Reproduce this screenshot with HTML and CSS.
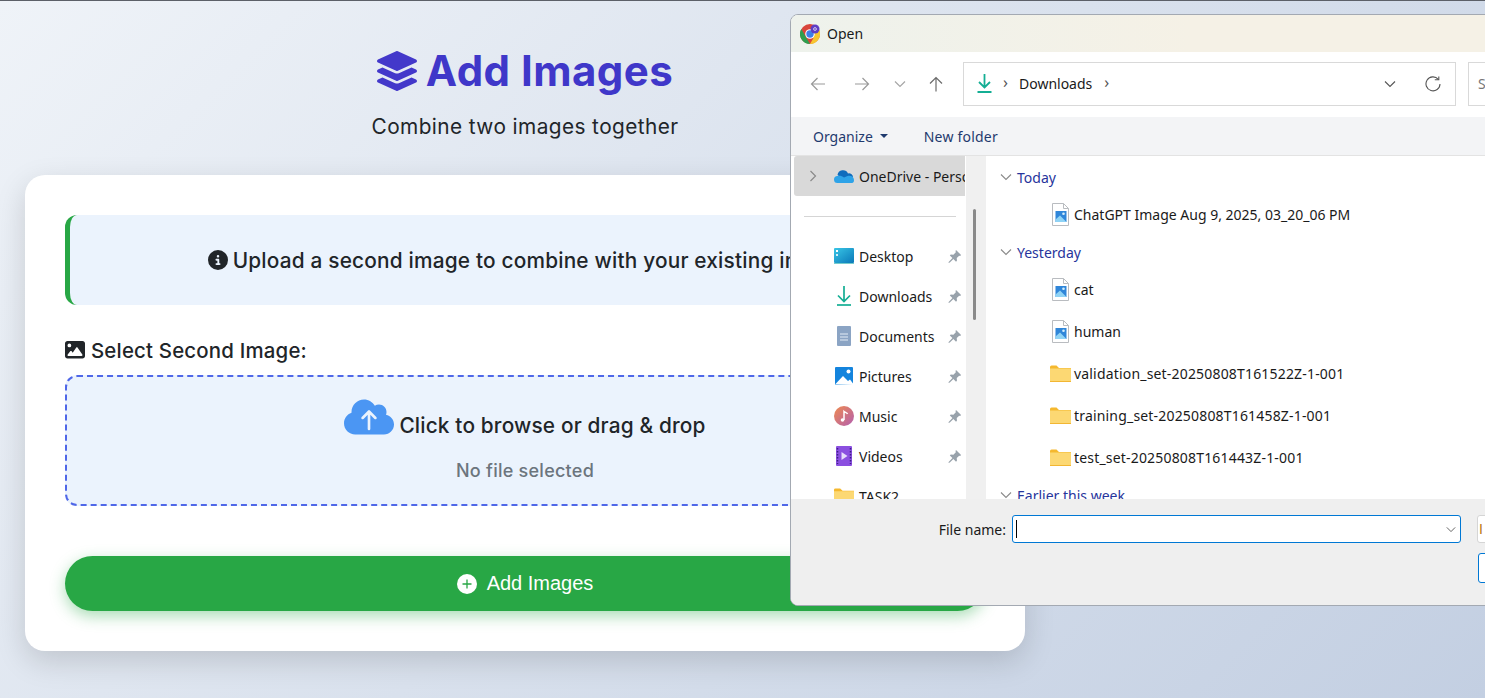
FILE: index.html
```html
<!DOCTYPE html>
<html lang="en">
<head>
<meta charset="utf-8">
<title>Add Images</title>
<link rel="stylesheet" href="styles.css">
</head>
<body>
<svg class="defs" width="0" height="0" aria-hidden="true">
  <symbol id="pin" viewBox="0 0 16 16"><path d="M9.600 1 15 6.400l-1 1-1-.3-2.600 2.600.2 2.800-1 1-2.800-2.800L3 14.500l-1.500.5.5-1.500 3.800-3.800L3 6.900l1-1 2.800.2 2.600-2.600-.3-1.500z"/></symbol>
  <symbol id="folder" viewBox="0 0 21 17"><path fill="#f5b82e" d="M0 2a1.500 1.500 0 0 1 1.500-1.500h5L9 3h12v14H0z"/><path fill="#fcd873" d="M0 3.500h21V16a1 1 0 0 1-1 1H1a1 1 0 0 1-1-1z"/><path fill="#f2b632" d="M0 16h21v1H0z"/></symbol>
  <symbol id="imgfile" viewBox="0 0 17 23"><path fill="#fff" stroke="#b9bcc0" d="M.5.500h11l5 5v17H.5z"/><path fill="none" stroke="#b9bcc0" d="M11.500.500v5h5"/><rect x="3.500" y="8" width="11" height="11" fill="#2f86d9"/><path fill="#8fd3f5" d="M3.500 19v-2.500L8 12.500l6.500 6.500z"/><circle cx="11.500" cy="10.800" r="1.300" fill="#d4effc"/></symbol>
  <symbol id="chev" viewBox="0 0 12 8"><path fill="none" stroke="currentColor" stroke-width="1.100" d="M1 1.500 6 6.500l5-5"/></symbol>
</svg>

<main class="page">
  <header class="head">
    <h1 class="title">
      <svg class="title-icon" viewBox="0 0 512 512"><path d="M12.410 148.020l232.940 105.670c6.800 3.090 14.490 3.090 21.290 0l232.940-105.670c16.550-7.510 16.550-32.520 0-40.030L266.650 2.310a25.607 25.607 0 0 0-21.290 0L12.410 107.980c-16.550 7.510-16.550 32.530 0 40.040zm487.180 88.280l-58.090-26.330-161.640 73.270c-7.560 3.430-15.590 5.170-23.860 5.170s-16.290-1.740-23.860-5.170L70.510 209.970l-58.100 26.330c-16.550 7.500-16.550 32.500 0 40l232.940 105.590c6.800 3.080 14.490 3.080 21.290 0L499.590 276.300c16.550-7.500 16.550-32.500 0-40zm0 127.800l-57.870-26.230-161.860 73.370c-7.560 3.430-15.590 5.170-23.860 5.170s-16.290-1.740-23.860-5.170L70.290 337.870 12.410 364.100c-16.550 7.500-16.550 32.500 0 40l232.940 105.590c6.800 3.080 14.490 3.080 21.290 0L499.590 404.100c16.550-7.500 16.550-32.500 0-40z"/></svg>
      Add Images
    </h1>
    <p class="subtitle">Combine two images together</p>
  </header>

  <section class="card">
    <div class="notice">
      <svg class="notice-icon" viewBox="0 0 512 512"><path d="M256 512A256 256 0 1 0 256 0a256 256 0 1 0 0 512zM216 336h24V272H216c-13.300 0-24-10.700-24-24s10.700-24 24-24h48c13.300 0 24 10.700 24 24v88h8c13.300 0 24 10.700 24 24s-10.700 24-24 24H216c-13.300 0-24-10.700-24-24s10.700-24 24-24zm40-208a32 32 0 1 1 0 64 32 32 0 1 1 0-64z"/></svg>
      <span>Upload a second image to combine with your existing image.</span>
    </div>

    <div class="field-label">
      <svg class="label-icon" viewBox="0 0 512 448"><path d="M0 64C0 28.700 28.700 0 64 0H448c35.300 0 64 28.700 64 64V384c0 35.300-28.700 64-64 64H64c-35.300 0-64-28.700-64-64V64zM323.800 170.500c-4.500-6.600-11.900-10.500-19.800-10.500s-15.400 3.900-19.800 10.500l-87 127.600L170.700 265c-4.600-5.700-11.500-9-18.700-9s-14.200 3.300-18.700 9l-64 80c-5.800 7.200-6.900 17.100-2.900 25.400s12.400 13.600 21.600 13.600h96 32H424c8.900 0 17.100-4.900 21.200-12.800s3.600-17.400-1.400-24.700l-120-176zM112 160a48 48 0 1 0 0-96 48 48 0 1 0 0 96z"/></svg>
      <span>Select Second Image:</span>
    </div>

    <div class="drop">
      <div class="drop-main">
        <svg class="cloud" viewBox="0 0 640 512"><path d="M144 480C64.500 480 0 415.500 0 336c0-62.800 40.200-116.200 96.200-135.900c-.1-2.700-.2-5.400-.2-8.100c0-88.400 71.600-160 160-160c59.300 0 111 32.200 138.700 80.200C409.900 102 428.300 96 448 96c53 0 96 43 96 96c0 12.200-2.300 23.800-6.400 34.600C596 238.400 640 290.100 640 352c0 70.700-57.300 128-128 128H144z"/><path class="cloud-arrow" d="M320 408V190M238 268l82-82 82 82"/></svg>
        <span>Click to browse or drag &amp; drop</span>
      </div>
      <div class="drop-status">No file selected</div>
    </div>

    <button class="submit" type="button">
      <svg class="plus" viewBox="0 0 20 20"><circle cx="10" cy="10" r="10" fill="#fff"/><path d="M10 5.500v9M5.500 10h9" stroke="#28a745" stroke-width="1.300"/></svg>
      <span>Add Images</span>
    </button>
  </section>
</main>

<div class="dialog">
  <div class="titlebar">
    <svg class="chrome" viewBox="0 0 20 20">
      <circle cx="10" cy="10" r="10" fill="#d9453a"/>
      <path fill="#2f9e4f" d="M10 20A10 10 0 0 1 1.300 5l5.200 9z"/>
      <path fill="#f7c62f" d="M10 20a10 10 0 0 0 8.700-15H10l3.500 9z"/>
      <circle cx="10" cy="10" r="4.800" fill="#fff"/>
      <circle cx="10" cy="10" r="3.700" fill="#3f7ee8"/>
      <circle cx="15" cy="5" r="4.500" fill="#5f3dc4"/>
      <circle cx="15" cy="5" r="1.400" fill="none" stroke="#fff" stroke-width=".7"/>
    </svg>
    <span>Open</span>
  </div>

  <div class="navbar">
    <svg class="nav-btn nav-back" viewBox="0 0 16 16"><path d="M15 8H1.500M7.500 2 1.500 8l6 6"/></svg>
    <svg class="nav-btn nav-fwd" viewBox="0 0 16 16"><path d="M1 8h13.500M8.500 2l6 6-6 6"/></svg>
    <svg class="nav-btn nav-down" viewBox="0 0 12 8"><path d="M1 1.500 6 6.500l5-5"/></svg>
    <svg class="nav-btn nav-up" viewBox="0 0 16 16"><path d="M8 15.500V1.500M2 7.500l6-6 6 6"/></svg>
    <div class="address">
      <svg class="dl-icon" viewBox="0 0 15 19"><path d="M7.500 0v13.500M2 8l5.500 5.500L13 8" fill="none" stroke="#14ae94" stroke-width="1.800"/><path d="M.5 18h14" stroke="#14ae94" stroke-width="1.800"/></svg>
      <span class="crumb-sep">›</span>
      <span class="crumb">Downloads</span>
      <span class="crumb-sep">›</span>
      <span class="grow"></span>
      <svg class="addr-chev" viewBox="0 0 12 8"><use href="#chev"/></svg>
      <svg class="refresh" viewBox="0 0 16 16"><path d="M13.300 3.300A7 7 0 1 0 15 8" fill="none" stroke="#555" stroke-width="1.100"/><path d="M9.800 3.700h4V.500" fill="none" stroke="#555" stroke-width="1.100"/></svg>
    </div>
    <div class="search">S</div>
  </div>

  <div class="toolbar">
    <span class="tool tool-org">Organize<i class="caret"></i></span>
    <span class="tool tool-new">New folder</span>
  </div>

  <div class="panes">
    <nav class="side">
      <div class="side-top">
        <svg class="side-chev" viewBox="0 0 8 12"><path d="M1.500 1l5 5-5 5" fill="none" stroke="#8a8a8a" stroke-width="1.200"/></svg>
        <svg class="onedrive" viewBox="0 0 20 14"><path fill="#0f6cbd" d="M3.500 6A5.500 5.500 0 0 1 14 4.500 4 4 0 0 1 19 8l-9 3z"/><path fill="#2ea3e8" d="M3.500 14A3.500 3.500 0 0 1 3.500 7C6 6.500 8 7 10 8.500l3.500-1.500c3-1 6.500.5 6.500 4s-2 3-3.500 3z"/></svg>
        <span class="side-clip">OneDrive - Personal</span>
      </div>
      <div class="side-rule"></div>
      <div class="side-item">
        <svg class="side-icon" viewBox="0 0 20 16"><defs><linearGradient id="gd" x1="0" y1="0" x2="1" y2="1"><stop offset="0" stop-color="#39c6e6"/><stop offset="1" stop-color="#0a78b8"/></linearGradient></defs><rect width="20" height="15" rx="1" fill="url(#gd)"/><rect y="15" width="20" height="1" fill="#7cc"/><rect x="2" y="2" width="2" height="2" fill="#fff"/><rect x="2" y="6" width="2" height="2" fill="#cfeefa"/></svg>
        <span>Desktop</span><svg class="pin"><use href="#pin"/></svg>
      </div>
      <div class="side-item">
        <svg class="side-icon" viewBox="0 0 20 20"><path d="M10 0v15M4 9.500l6 6 6-6" fill="none" stroke="#14ae94" stroke-width="1.700"/><path d="M3 19h14" stroke="#14ae94" stroke-width="1.700"/></svg>
        <span>Downloads</span><svg class="pin"><use href="#pin"/></svg>
      </div>
      <div class="side-item">
        <svg class="side-icon" viewBox="0 0 20 20"><rect x="3" width="14" height="20" rx="1" fill="#8ba4c4"/><path d="M6 8h8M6 11h8M6 14h8" stroke="#e4ecf5" stroke-width="1.200"/></svg>
        <span>Documents</span><svg class="pin"><use href="#pin"/></svg>
      </div>
      <div class="side-item">
        <svg class="side-icon" viewBox="0 0 20 18"><rect x="1" width="18" height="18" rx="1" fill="#1484dd"/><path fill="#fff" d="M1 17.500 9 9l5 5 2-1.500 3 4v1.500z"/><circle cx="14.500" cy="4.500" r="2" fill="#fff"/></svg>
        <span>Pictures</span><svg class="pin"><use href="#pin"/></svg>
      </div>
      <div class="side-item">
        <svg class="side-icon" viewBox="0 0 20 20"><defs><linearGradient id="gm" x1="0" y1="0" x2="1" y2="1"><stop offset="0" stop-color="#ef8a4f"/><stop offset="1" stop-color="#b35fb0"/></linearGradient></defs><circle cx="10" cy="10" r="10" fill="url(#gm)"/><path d="M10 14V5.500c1 1 3 1 3.500 2.500" fill="none" stroke="#fff" stroke-width="1.500"/><circle cx="8.500" cy="14" r="1.800" fill="#fff"/></svg>
        <span>Music</span><svg class="pin"><use href="#pin"/></svg>
      </div>
      <div class="side-item">
        <svg class="side-icon" viewBox="0 0 20 20"><rect x="2" width="16" height="20" rx="1" fill="#8b4fe0"/><path d="M7.500 6v8l6-4z" fill="#e7dcfb"/><path d="M3.500 2v16M16.500 2v16" stroke="#3d1e85" stroke-width="1.500" stroke-dasharray="1.500 1.500"/></svg>
        <span>Videos</span><svg class="pin"><use href="#pin"/></svg>
      </div>
      <div class="side-item">
        <svg class="side-icon"><use href="#folder"/></svg>
        <span>TASK2</span>
      </div>
    </nav>
    <div class="side-scroll"><div class="side-thumb"></div></div>
    <div class="files">
      <div class="group"><svg class="group-chev"><use href="#chev"/></svg>Today</div>
      <div class="file file-first"><svg class="file-img"><use href="#imgfile"/></svg>ChatGPT Image Aug 9, 2025, 03_20_06 PM</div>
      <div class="group group-next"><svg class="group-chev"><use href="#chev"/></svg>Yesterday</div>
      <div class="file file-first"><svg class="file-img"><use href="#imgfile"/></svg>cat</div>
      <div class="file"><svg class="file-img"><use href="#imgfile"/></svg>human</div>
      <div class="file file-set"><svg class="file-dir"><use href="#folder"/></svg>validation_set-20250808T161522Z-1-001</div>
      <div class="file file-set"><svg class="file-dir"><use href="#folder"/></svg>training_set-20250808T161458Z-1-001</div>
      <div class="file file-set"><svg class="file-dir"><use href="#folder"/></svg>test_set-20250808T161443Z-1-001</div>
      <div class="group group-next"><svg class="group-chev"><use href="#chev"/></svg>Earlier this week</div>
    </div>
  </div>

  <div class="footer">
    <div class="name-row">
      <label class="name-label">File name:</label>
      <div class="name-input"><i class="cursor"></i><svg class="name-chev"><use href="#chev"/></svg></div>
      <div class="filter">I</div>
    </div>
    <div class="open-btn"></div>
  </div>
</div>
</body>
</html>
```

FILE: styles.css
```css
* { box-sizing: border-box; }

html, body { height: 100%; }

body {
  margin: 0;
  overflow: hidden;
  background: linear-gradient(135deg, #eff3f8 0%, #c3cfe2 100%);
  border-top: 1px solid #5c6068;
  font-family: Inter, "Open Sans", sans-serif;
  color: #212529;
}

.defs { position: absolute; }

.page { width: 1050px; padding: 0 25px; }

.head { text-align: center; }

.title {
  display: flex;
  align-items: center;
  justify-content: center;
  gap: 9px;
  margin: 0;
  padding-top: 46px;
  height: 94px;
  font-size: 42px;
  line-height: 48px;
  font-weight: 700;
  color: #3f37c9;
  letter-spacing: 0.45px;
}

.title-icon { width: 40px; height: 40px; fill: #4338ca; }

.subtitle {
  margin: 17px 0 0;
  font-size: 20.800px;
  line-height: 30px;
  letter-spacing: 0.42px;
  color: #212529;
}

.card {
  margin-top: 33px;
  height: 476px;
  padding: 40px;
  background: #fff;
  border-radius: 20px;
  box-shadow: 0 10px 30px rgba(0, 0, 0, 0.15);
}

.notice {
  display: flex;
  align-items: center;
  justify-content: center;
  gap: 5px;
  height: 90px;
  background: #ebf3fd;
  border-left: 5px solid #28a745;
  border-radius: 12px;
  font-size: 20.800px;
  font-weight: 500;
  letter-spacing: 0.2px;
  white-space: nowrap;
}

.notice-icon { width: 20px; height: 20px; fill: #212529; }

.field-label {
  display: flex;
  align-items: center;
  gap: 6px;
  margin-top: 30px;
  height: 30px;
  font-size: 20.400px;
  font-weight: 500;
  letter-spacing: 0.2px;
}

.label-icon { width: 20px; height: 17.500px; fill: #212529; }

.drop {
  margin-top: 10px;
  height: 131px;
  padding-top: 20px;
  background: #ebf3fd;
  border: 2px dashed #4f67e8;
  border-radius: 12px;
  text-align: center;
}

.drop-main {
  display: flex;
  align-items: flex-end;
  justify-content: center;
  gap: 5px;
  font-size: 20.800px;
  font-weight: 500;
  letter-spacing: 0.17px;
}

.drop-main span { line-height: 26px; margin-bottom: -2px; }

.cloud { width: 50px; height: 40px; fill: #4b96f3; }

.cloud-arrow {
  fill: none;
  stroke: #ebf3fd;
  stroke-width: 34;
  stroke-linecap: round;
  stroke-linejoin: round;
}

.drop-status {
  margin-top: 21px;
  font-size: 18px;
  line-height: 26px;
  font-weight: 500;
  letter-spacing: 0.25px;
  color: #6c757d;
}

.submit {
  display: flex;
  align-items: center;
  justify-content: center;
  gap: 10px;
  width: 100%;
  height: 55px;
  margin-top: 50px;
  border: 0;
  border-radius: 50px;
  background: #28a745;
  color: #fff;
  font-family: "Liberation Sans", Arial, sans-serif;
  font-size: 20px;
  box-shadow: 0 5px 15px rgba(40, 167, 69, 0.4);
}

.plus { width: 20px; height: 20px; }

/* Windows file dialog, a window lying over the page */
.dialog {
  position: absolute;
  left: 790px;
  top: 14px;
  width: 800px;
  height: 592px;
  display: flex;
  flex-direction: column;
  background: #fff;
  border: 1px solid #a3a9b2;
  border-radius: 8px 0 0 8px;
  overflow: hidden;
  font-family: "Noto Sans", "Open Sans", sans-serif;
  font-size: 14px;
  color: #1a1a1a;
}

.titlebar {
  display: flex;
  align-items: center;
  gap: 7px;
  flex: none;
  height: 37px;
  padding-left: 9px;
  background: linear-gradient(90deg, #eef2ec 0%, #f5f1e6 50%, #f5f1e6 100%);
}

.chrome { width: 20px; height: 20px; }

.navbar {
  position: relative;
  display: flex;
  align-items: center;
  flex: none;
  height: 65px;
  padding: 0 0 2px 172px;
}

.nav-btn {
  position: absolute;
  fill: none;
  stroke-width: 1.200;
}

.nav-back { left: 19px; top: 24px; width: 16px; height: 16px; stroke: #9a9a9a; }
.nav-fwd { left: 63px; top: 24px; width: 16px; height: 16px; stroke: #9a9a9a; }
.nav-down { left: 103px; top: 28px; width: 12px; height: 8px; stroke: #a6a6a6; }
.nav-up { left: 137px; top: 24px; width: 16px; height: 16px; stroke: #6b6b6b; }

.address {
  display: flex;
  align-items: center;
  flex: none;
  width: 493px;
  height: 44px;
  padding: 0 14px 0 13px;
  border: 1px solid #d9d9d9;
}

.dl-icon { width: 15px; height: 19px; margin-right: 7px; }
.crumb-sep { margin: 0 6px 3px 4px; font-size: 16px; color: #555; }
.crumb { margin-left: 5px; margin-right: 8px; }
.grow { flex: 1; }

.addr-chev { width: 12px; height: 8px; margin-right: 29px; color: #555; }
.refresh { width: 16px; height: 16px; }

.search {
  flex: none;
  width: 120px;
  height: 44px;
  margin-left: 12px;
  padding-left: 9px;
  border: 1px solid #d9d9d9;
  line-height: 42px;
  color: #777;
}

.toolbar {
  display: flex;
  align-items: center;
  flex: none;
  gap: 36px;
  height: 39px;
  padding-left: 22px;
  background: #f3f4f6;
  border-bottom: 1px solid #e3e3e3;
  color: #1f3a6e;
}

.tool-org { display: flex; align-items: center; gap: 7px; }
.tool-new { letter-spacing: 0.2px; }

.caret {
  width: 0;
  height: 0;
  border-left: 4px solid transparent;
  border-right: 4px solid transparent;
  border-top: 4px solid #1f3a6e;
}

.panes { display: flex; flex: none; height: 343px; overflow: hidden; }

.side { flex: none; width: 175px; padding-left: 3px; overflow: hidden; }

.side-top {
  display: flex;
  align-items: center;
  width: 171px;
  height: 40px;
  padding-left: 15px;
  background: #d9d9d9;
  border-radius: 3px 0 0 3px;
  overflow: hidden;
  white-space: nowrap;
}

.side-chev { width: 8px; height: 12px; flex: none; margin-right: 17px; }
.onedrive { width: 20px; height: 14px; flex: none; margin-right: 5px; }

.side-rule { height: 1px; margin: 20px 10px 0; background: #d5d5d5; }

.side-item {
  display: flex;
  align-items: center;
  height: 40px;
  padding-left: 40px;
  white-space: nowrap;
}

.side-item:nth-child(3) { margin-top: 19px; }

.side-icon { width: 20px; height: 20px; flex: none; margin-right: 5px; }
.side-item span { flex: 1; }
.pin { width: 15px; height: 15px; flex: none; margin-right: 4px; fill: #98a2ab; }

.side-scroll { flex: none; width: 20px; background: #f0f0f0; }

.side-thumb {
  width: 3px;
  height: 111px;
  margin: 53px 0 0 7px;
  border-radius: 2px;
  background: #8a8a8a;
}

.files { flex: 1; overflow: hidden; padding-top: 10px; }

.group {
  display: flex;
  align-items: center;
  height: 22px;
  padding-left: 14px;
  color: #27359c;
}

.group-next { margin-top: 15px; }

.group-chev { width: 12px; height: 8px; margin-right: 5px; color: #8a8a8a; }

.file {
  display: flex;
  align-items: center;
  height: 24px;
  margin-top: 18px;
  padding-left: 66px;
  white-space: nowrap;
}

.file-first { margin-top: 14px; }
.file-set { letter-spacing: 0.18px; }

.file-img { width: 17px; height: 23px; margin-right: 5px; }
.file-dir { width: 21px; height: 17px; margin-left: -2px; margin-right: 3px; }

.footer { flex: none; height: 106px; padding-top: 16px; background: #efefef; }

.name-row { display: flex; align-items: center; height: 28px; }

.name-label { flex: none; width: 221px; text-align: right; padding-right: 6px; white-space: nowrap; }

.name-input {
  display: flex;
  align-items: center;
  justify-content: space-between;
  flex: none;
  width: 449px;
  height: 28px;
  padding: 0 3px;
  background: #fff;
  border: 1px solid #0078d4;
  border-radius: 3px;
}

.cursor { width: 1px; height: 18px; background: #000; }
.name-chev { width: 10px; height: 7px; margin-right: 1px; color: #555; }

.filter {
  flex: none;
  width: 120px;
  height: 28px;
  margin-left: 16px;
  padding-left: 1px;
  background: #fff;
  border: 1px solid #d5d5d5;
  border-radius: 3px;
  font-family: "Liberation Sans", sans-serif;
  line-height: 26px;
  color: #b9770e;
}

.open-btn {
  width: 100px;
  height: 30px;
  margin: 10px 0 0 687px;
  background: #fff;
  border: 1px solid #0078d4;
  border-radius: 3px;
}
```
